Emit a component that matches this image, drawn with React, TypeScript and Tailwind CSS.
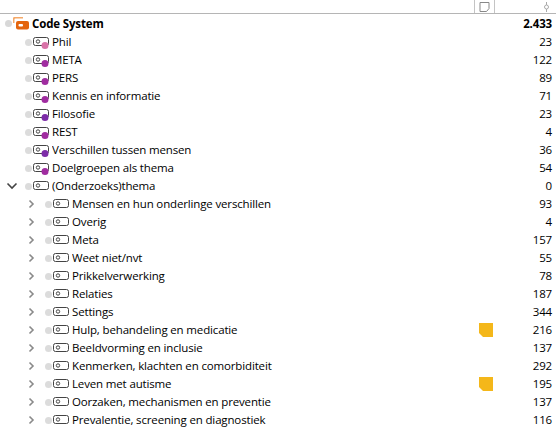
import React from 'react';

type Row = { label: string; count: string; level: number; dot?: string; open?: boolean; arrow?: boolean; memo?: boolean };

const rows: Row[] = [
  { label: 'Phil', count: '23', level: 1, dot: '#d973a8' },
  { label: 'META', count: '122', level: 1, dot: '#a02ca0' },
  { label: 'PERS', count: '89', level: 1, dot: '#a02ca0' },
  { label: 'Kennis en informatie', count: '71', level: 1, dot: '#a02ca0' },
  { label: 'Filosofie', count: '23', level: 1, dot: '#7d2ca8' },
  { label: 'REST', count: '4', level: 1, dot: '#a02ca0' },
  { label: 'Verschillen tussen mensen', count: '36', level: 1, dot: '#7d2ca8' },
  { label: 'Doelgroepen als thema', count: '54', level: 1, dot: '#a02ca0' },
  { label: '(Onderzoeks)thema', count: '0', level: 1, open: true },
  { label: 'Mensen en hun onderlinge verschillen', count: '93', level: 2, arrow: true },
  { label: 'Overig', count: '4', level: 2, arrow: true },
  { label: 'Meta', count: '157', level: 2, arrow: true },
  { label: 'Weet niet/nvt', count: '55', level: 2, arrow: true },
  { label: 'Prikkelverwerking', count: '78', level: 2, arrow: true },
  { label: 'Relaties', count: '187', level: 2, arrow: true },
  { label: 'Settings', count: '344', level: 2, arrow: true },
  { label: 'Hulp, behandeling en medicatie', count: '216', level: 2, arrow: true, memo: true },
  { label: 'Beeldvorming en inclusie', count: '137', level: 2, arrow: true },
  { label: 'Kenmerken, klachten en comorbiditeit', count: '292', level: 2, arrow: true },
  { label: 'Leven met autisme', count: '195', level: 2, arrow: true, memo: true },
  { label: 'Oorzaken, mechanismen en preventie', count: '137', level: 2, arrow: true },
  { label: 'Prevalentie, screening en diagnostiek', count: '116', level: 2, arrow: true },
];

function CodeTag({ dot }: { dot?: string }) {
  return (
    <svg width="20" height="16" viewBox="0 0 20 16" className="shrink-0">
      <rect x="1.500" y="3.500" width="15" height="8" rx="2" fill="#fff" stroke="#444" />
      <circle cx="6" cy="7.500" r="1.700" fill="none" stroke="#444" />
      {dot && <circle cx="13" cy="11.500" r="3.500" fill={dot} />}
    </svg>
  );
}

function Chevron({ open }: { open?: boolean }) {
  return (
    <svg width="12" height="12" viewBox="0 0 12 12" className="shrink-0">
      {open ? (
        <path d="M1.500 3.500l4.500 4.500 4.500-4.500" fill="none" stroke="#444" strokeWidth="1.600" />
      ) : (
        <path d="M3.500 2.500l3.500 3.500-3.500 3.500" fill="none" stroke="#8a8a8a" strokeWidth="1.600" />
      )}
    </svg>
  );
}

function Memo() {
  return (
    <svg width="14" height="14" viewBox="0 0 14 14" className="shrink-0">
      <path d="M0 0h14v14H4L0 10z" fill="#f4b71a" />
    </svg>
  );
}

export default function App() {
  return (
    <div className="h-[428px] w-[556px] overflow-hidden bg-white text-[11.5px] tracking-[-0.15px] text-black font-['Open_Sans','Noto_Sans',sans-serif]">
      <div className="flex h-[14px] items-stretch justify-end border-b border-[#b5b5b5]">
        <div className="flex w-[21px] items-center justify-center border-x border-[#c4c4c4]">
          <svg width="11" height="10" viewBox="0 0 11 10">
            <path d="M1 .5h9v6l-2.500 3H1z" fill="none" stroke="#888" />
          </svg>
        </div>
        <div className="flex w-[61px] items-center justify-end pr-[6px]">
          <svg width="7" height="10" viewBox="0 0 7 10">
            <circle cx="3.500" cy="5" r="2" fill="none" stroke="#aaa" />
            <path d="M3.500 0v3M3.500 7v3" stroke="#aaa" />
          </svg>
        </div>
      </div>

      <div className="flex h-[19px] items-center pl-[5px] pr-[4px] font-bold">
        <span className="h-[7px] w-[7px] shrink-0 rounded-full bg-[#d8d8d8]" />
        <svg width="17" height="13" viewBox="0 0 17 13" className="ml-[1px] mr-[2px] shrink-0">
          <path d="M0.500 6V2.500A2 2 0 0 1 2.500 0.500H10" fill="none" stroke="#f5a867" strokeWidth="2" />
          <rect x="3" y="4" width="13" height="8.500" rx="2" fill="#e4640c" />
          <rect x="5.500" y="7" width="4.500" height="2.500" rx="1" fill="#fff" />
        </svg>
        <span className="flex-1">Code System</span>
        <span>2.433</span>
      </div>

      {rows.map((row) => (
        <div key={row.label} className="flex h-[18px] items-center pr-[4px]">
          <div className={row.level === 1 ? 'flex w-[25px] shrink-0 justify-start pl-[6px]' : 'flex w-[45px] shrink-0 justify-start pl-[26px]'}>
            {(row.arrow || row.open) && <Chevron open={row.open} />}
          </div>
          <span className="h-[7px] w-[7px] shrink-0 rounded-full bg-[#dcdcdc]" />
          <CodeTag dot={row.dot} />
          <span className="flex-1 truncate">{row.label}</span>
          <div className="flex w-[14px] shrink-0 justify-end">{row.memo && <Memo />}</div>
          <span className="w-[59px] shrink-0 text-right">{row.count}</span>
        </div>
      ))}
    </div>
  );
}
